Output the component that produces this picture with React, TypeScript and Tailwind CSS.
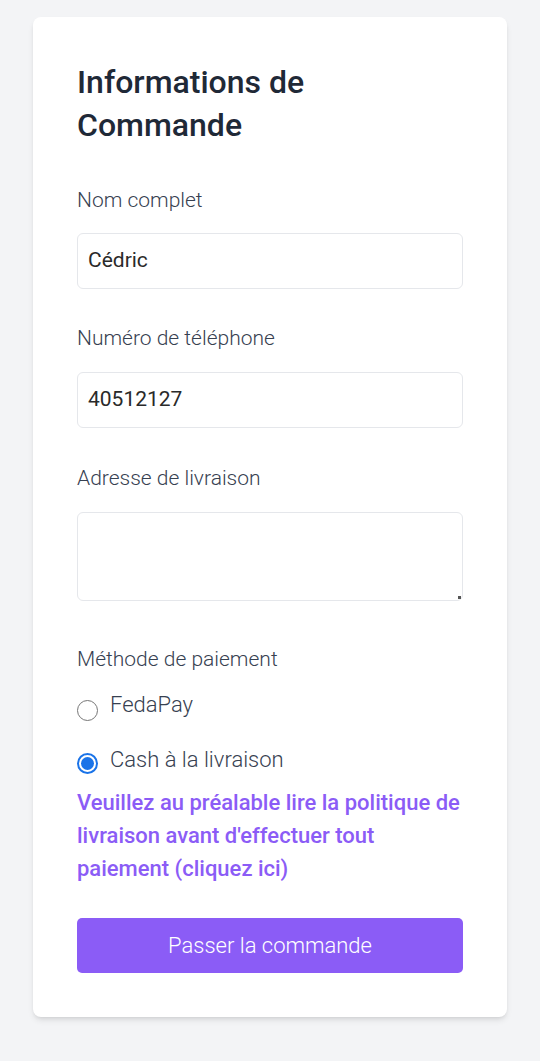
import React from "react";

function Radio({ checked, label }: { checked: boolean; label: string }) {
  return (
    <label className="flex items-center gap-[12px] h-[30px]">
      {checked ? (
        <span className="w-[21px] h-[21px] rounded-full border-[2px] border-[#1a73e8] flex items-center justify-center translate-y-[3px] shrink-0">
          <span className="w-[13px] h-[13px] rounded-full bg-[#1a73e8]" />
        </span>
      ) : (
        <span className="w-[21px] h-[21px] rounded-full border-[1.5px] border-[#767676] translate-y-[5px] shrink-0" />
      )}
      <span className="text-[22px] leading-[30px] text-[#374151] font-light">{label}</span>
    </label>
  );
}

export default function App() {
  return (
    <div
      className="min-h-screen bg-[#f3f4f6] pt-[17px] px-[33px] pb-[44px]"
      style={{ fontFamily: "Roboto, 'Noto Sans', sans-serif" }}
    >
      <div className="bg-white rounded-[8px] shadow-[0_4px_6px_-1px_rgba(0,0,0,0.1),0_2px_4px_-2px_rgba(0,0,0,0.1)] p-[44px]">
        <h2 className="text-[32px] leading-[43px] font-medium text-[#1f2937] mb-[38px]">
          Informations de
          <br />
          Commande
        </h2>

        <label className="block text-[21px] leading-[30px] text-[#374151] font-light mb-[18px]">
          Nom complet
        </label>
        <div className="h-[56px] border border-[#e5e7eb] rounded-[6px] px-[10px] flex items-center text-[21px] text-[#2a2a2a] mb-[34px]">
          Cédric
        </div>

        <label className="block text-[21px] leading-[30px] text-[#374151] font-light mb-[19px]">
          Numéro de téléphone
        </label>
        <div className="h-[56px] border border-[#e5e7eb] rounded-[6px] px-[10px] flex items-center text-[21px] text-[#2a2a2a] mb-[35px]">
          40512127
        </div>

        <label className="block text-[21px] leading-[30px] text-[#374151] font-light mb-[19px]">
          Adresse de livraison
        </label>
        <div className="relative h-[89px] border border-[#e5e7eb] rounded-[6px] mb-[43px]">
          <span className="absolute right-[1px] bottom-[1px] w-[3px] h-[3px] bg-[#555]" />
        </div>

        <label className="block text-[21px] leading-[30px] text-[#374151] font-light mb-[16px]">
          Méthode de paiement
        </label>
        <div className="flex flex-col gap-[25px]">
          <Radio checked={false} label="FedaPay" />
          <Radio checked={true} label="Cash à la livraison" />
        </div>

        <p className="mt-[11px] text-[22px] leading-[33px] font-medium text-[#8b5cf6]">
          Veuillez au préalable lire la politique de livraison avant d'effectuer tout paiement (cliquez ici)
        </p>

        <button className="mt-[33px] w-full h-[55px] bg-[#8b5cf6] rounded-[5px] text-white text-[22px] font-light">
          Passer la commande
        </button>
      </div>
    </div>
  );
}
